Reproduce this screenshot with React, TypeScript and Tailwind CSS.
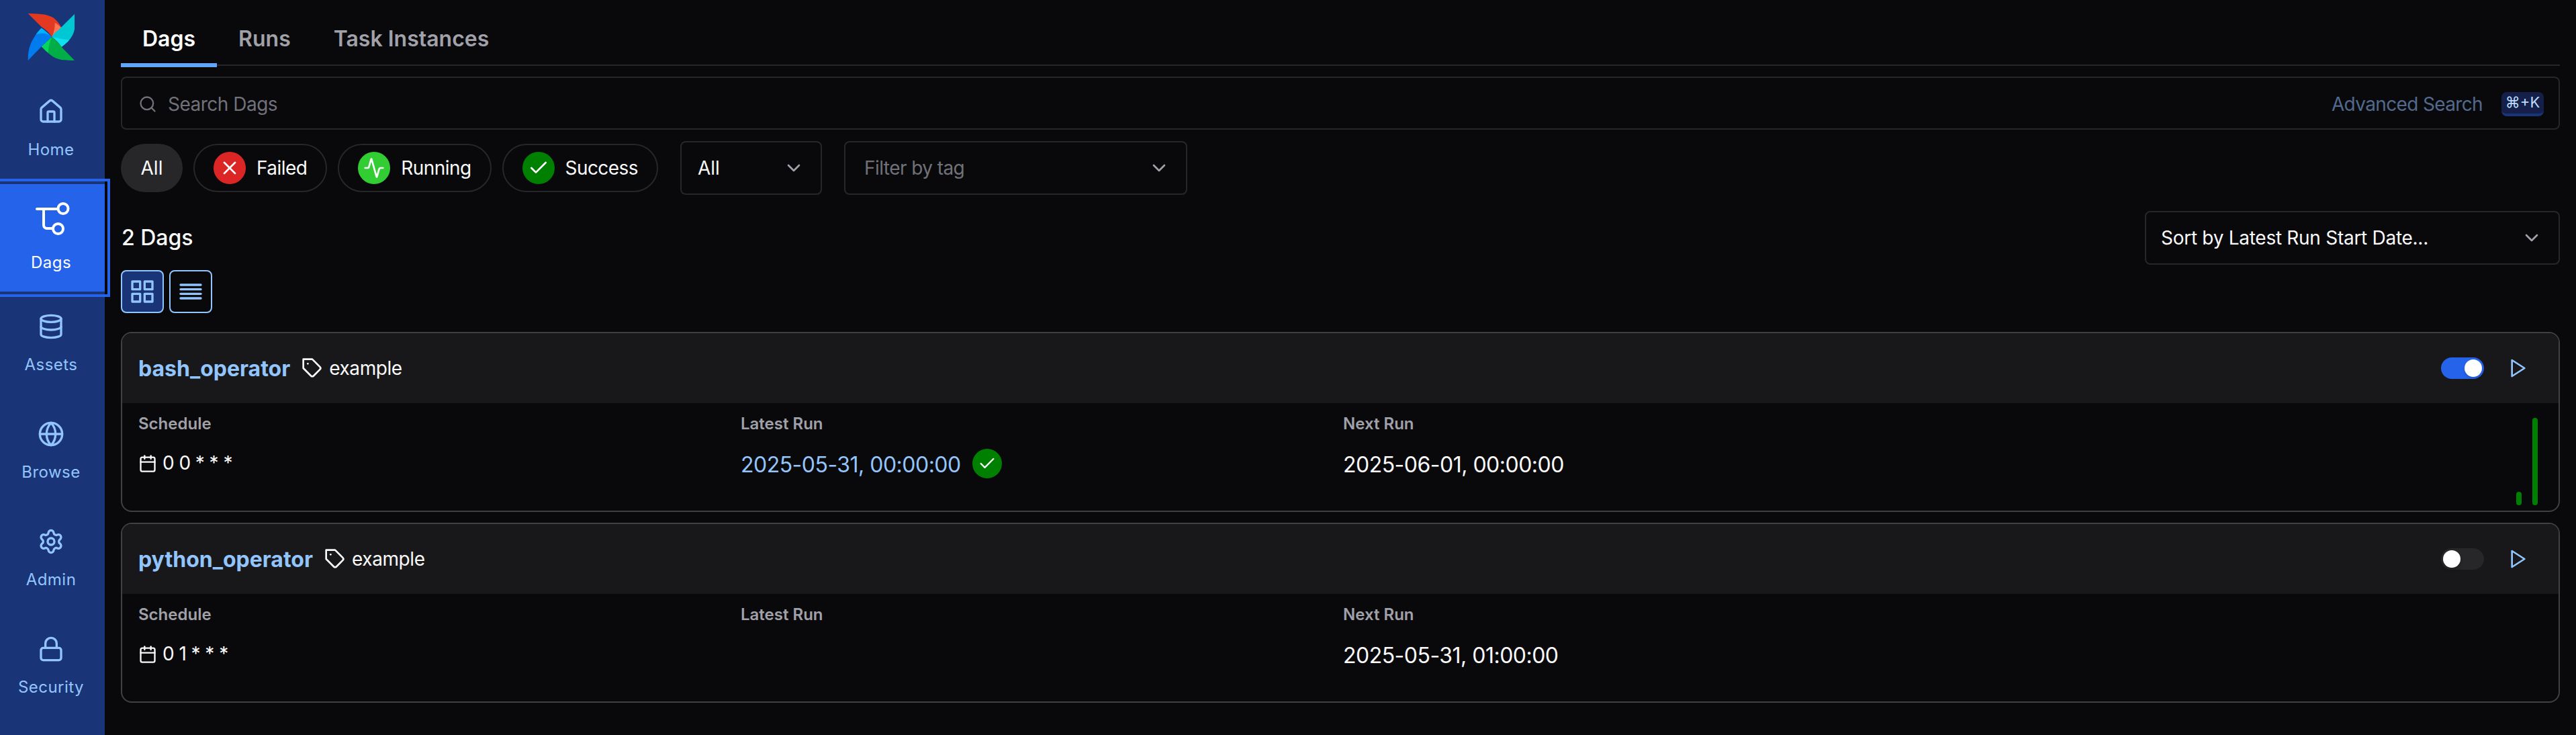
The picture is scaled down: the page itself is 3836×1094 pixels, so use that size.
import { Activity, Calendar, Check, ChevronDown, Database, Globe, House, Lock, Search, Settings, X } from "lucide-react";
import { FiAlignJustify, FiGrid, FiPlay, FiTag } from "react-icons/fi";
import type { ReactNode } from "react";

function Logo() {
	return (
		<svg width="70" height="70" viewBox="0 0 70 70" className="shrink-0">
			{/* red */}
			<path d="M0.7 0C10 0.2 18 0.4 25.7 1.7C31 3 36 4.5 39 6.7C44 10.5 48 16 50.7 21.7L36.3 35C33 29 27 24 20.7 20Z" fill="#e43921" />
			<path d="M40.7 14C44.5 16 48 18.5 50.7 21.7L36.3 35C39 29 41 21 40.7 14Z" fill="#ff7557" />
			{/* teal */}
			<path d="M70 1C70.6 9 70.6 16 70 23.3C69.6 26 68.6 29 67.3 31.7C65 36 62 40 59 43.3L36.3 35C38 31 41 28 45.7 25Z" fill="#00c7d4" />
			<path d="M36.3 35C44 37 52 38 62 39.5C59 43 55 47 50.7 50C47 44 42 39 36.3 35Z" fill="#11e1ee" />
			{/* green */}
			<path d="M70 70C63 70 57 70 52 69.3C47 68.5 43 67 39 65C32 61 26 55 20.7 49.3L36.3 35C42 39 47 44 50.7 50Z" fill="#00ad46" />
			<path d="M36.3 35C33 42 31 50 30.7 58.5C27 55.5 24 52.5 20.7 49.3Z" fill="#04d659" />
			{/* blue */}
			<path d="M0.7 70C0.6 64 1 58 2.3 53C3.5 48 5 44 7.3 40C9 37 10.5 34 12.3 31.7C15 28 17.5 24.5 20.7 21.7L36.3 35L20.7 49.3Z" fill="#017cee" />
			<path d="M12.3 31.7C15 28 17.5 24.5 20.7 21.7C26 25 31 30 36.3 35C29 29 20 28 12.3 31.7Z" fill="#00b2ff" />
		</svg>
	);
}

function DagIcon() {
	return (
		<svg width="56" height="56" viewBox="0 0 56 56" fill="none" stroke="currentColor" strokeWidth="4" strokeLinecap="round">
			<path d="M7 13H37" />
			<circle cx="46" cy="12.5" r="7.5" />
			<path d="M17 13V37a5 5 0 0 0 5 5H29" />
			<circle cx="38.5" cy="42.5" r="7.5" />
		</svg>
	);
}

function NavItem({ icon, label, active }: { icon: ReactNode; label: string; active?: boolean }) {
	return (
		<div
			className={`flex h-40 w-[156px] flex-col items-center justify-center pt-px pr-1 ${
				active ? "bg-[#2563eb] text-white outline-4 outline-offset-4 outline-[#2563eb]" : "text-[#93c5fd]"
			}`}
		>
			{icon}
			<span className="mt-[17px] text-2xl leading-10 tracking-[0.02em]">{label}</span>
		</div>
	);
}

function Pill({ color, icon, label }: { color: string; icon: ReactNode; label: string }) {
	return (
		<div className="flex h-[72px] items-center gap-4 rounded-full border-2 border-[#27272a] pr-7 pl-7 text-[28px] tracking-[-0.02em] text-[#fafafa]">
			<span className={`flex h-12 w-12 items-center justify-center rounded-full text-white ${color}`}>{icon}</span>
			{label}
		</div>
	);
}

function Select({ text, className }: { text: string; className: string }) {
	return (
		<div className={`flex h-20 items-center justify-between rounded-lg border-2 border-[#27272a] pr-6 text-[28px] ${className}`}>
			<span>{text}</span>
			<ChevronDown size={32} className="text-[#a1a1aa]" />
		</div>
	);
}

function Label({ children }: { children: ReactNode }) {
	return <div className="text-2xl leading-8 font-semibold text-[#a1a1aa]">{children}</div>;
}

function DagCard({ name, on, schedule, latest, next }: { name: string; on: boolean; schedule: string; latest?: string; next: string }) {
	return (
		<div className="h-[268px] overflow-hidden rounded-2xl border-2 border-[#3f3f46]">
			<div className="flex h-[104px] items-center justify-between bg-[#18181b] pr-[44px] pl-6">
				<div className="flex items-center">
					<span className="pt-[2px] text-[32px] font-bold text-[#93c5fd]">{name}</span>
					<FiTag size={32} className="ml-[17px] text-[#fafafa]" />
					<span className="ml-[9px] text-[28px] tracking-[-0.015em] text-[#fafafa]">example</span>
				</div>
				<div className="flex items-center gap-[35px]">
					<div className={`flex h-8 w-16 items-center rounded-full p-[3px] ${on ? "justify-end bg-[#2563eb]" : "justify-start bg-[#27272a]"}`}>
						<span className="h-[26px] w-[26px] rounded-full bg-white shadow-md" />
					</div>
					<FiPlay size={32} className="text-[#93c5fd]" />
				</div>
			</div>
			<div className="grid h-[160px] grid-cols-4 gap-2 pt-[15px] pr-6 pb-2 pl-6">
				<div>
					<Label>Schedule</Label>
					<div className="mt-[21px] flex items-center gap-[8px] text-[28px] leading-[44px] tracking-[-0.02em] text-[#fafafa]">
						<Calendar size={28} />
						<span className="-mt-[1px]">{schedule}</span>
					</div>
				</div>
				<div>
					<Label>Latest Run</Label>
					{latest && (
						<div className="mt-[21px] flex h-11 items-center gap-[17px] text-[32px] tracking-[-0.016em] text-[#93c5fd]">
							<span className="mt-1">{latest}</span>
							<span className="flex h-11 w-11 items-center justify-center rounded-full bg-[#008000] text-white">
								<Check size={28} />
							</span>
						</div>
					)}
				</div>
				<div>
					<Label>Next Run</Label>
					<div className="mt-[21px] flex h-11 items-center text-[32px] tracking-[-0.016em] text-[#fafafa]">
						<span className="mt-1">{next}</span>
					</div>
				</div>
				<div className="flex items-end justify-end gap-4 pr-[7px]">
					{latest && (
						<>
							<span className="h-[20px] w-2 rounded-sm bg-[#008000]" />
							<span className="h-[130px] w-2 rounded-sm bg-[#008000]" />
						</>
					)}
				</div>
			</div>
		</div>
	);
}

export default function App() {
	return (
		<div className="flex h-[1094px] bg-[#09090b] font-[Inter,sans-serif] text-[#fafafa]">
			<nav className="relative z-10 flex w-[156px] shrink-0 flex-col items-center bg-[#1a3478] pt-5">
				<div className="mb-6 flex h-[70px] items-center pr-1">
					<Logo />
				</div>
				<NavItem icon={<House size={40} />} label="Home" />
				<NavItem icon={<DagIcon />} label="Dags" active />
				<NavItem icon={<Database size={40} />} label="Assets" />
				<NavItem icon={<Globe size={40} />} label="Browse" />
				<NavItem icon={<Settings size={40} />} label="Admin" />
				<NavItem icon={<Lock size={40} />} label="Security" />
			</nav>

			<main className="min-w-0 flex-1 pt-4 pr-6 pl-6">
				<div className="flex h-[82px] border-b-2 border-[#27272a] text-[32px] font-semibold text-[#a1a1aa]">
					<div className="-mb-[2px] flex h-[84px] items-center border-b-[6px] border-[#60a5fa] pt-[6px] pr-8 pl-8 text-white">Dags</div>
					<div className="flex h-[84px] items-center border-b-[6px] border-transparent pt-[6px] pr-8 pl-8">Runs</div>
					<div className="flex h-[84px] items-center border-b-[6px] border-transparent pt-[6px] pr-8 pl-8">Task Instances</div>
				</div>

				<div className="mt-4 flex h-[79px] items-center justify-between rounded-lg border-2 border-[#27272a] pt-[2px] pr-[22px] pl-6 text-[28px]">
					<div className="flex items-center gap-4 text-[#71717a]">
						<Search size={28} />
						<span className="tracking-[-0.018em]">Search Dags</span>
					</div>
					<div className="flex items-center gap-7">
						<span className="tracking-[-0.023em] text-[#526a8e]">Advanced Search</span>
						<span className="flex h-9 w-[63px] items-center justify-center rounded-lg border-b-4 border-[#1a3478] bg-[#14204a] text-[22px] text-[#bfdbfe]">⌘+K</span>
					</div>
				</div>

				<div className="mt-[17px] flex h-20 items-center">
					<div className="flex h-[72px] w-[92px] items-center justify-center rounded-full bg-[#27272a] text-[28px]">All</div>
					<div className="ml-4 flex gap-4">
						<Pill color="bg-[#dc2626]" icon={<X size={32} />} label="Failed" />
						<Pill color="bg-[#32cd32]" icon={<Activity size={32} />} label="Running" />
						<Pill color="bg-[#008000]" icon={<Check size={32} />} label="Success" />
					</div>
					<div className="ml-[33px] flex gap-[33px]">
						<Select text="All" className="w-[211px] pl-6 text-[#fafafa]" />
						<Select text="Filter by tag" className="w-[511px] pl-7 tracking-[-0.02em] text-[#71717a]" />
					</div>
				</div>

				<div className="mt-6 flex h-[79px] items-center justify-between">
					<h2 className="mt-px ml-px text-[32px] font-medium">2 Dags</h2>
					<Select text="Sort by Latest Run Start Date..." className="w-[618px] pl-[22px] tracking-[-0.01em] text-[#fafafa]" />
				</div>

				<div className="mt-[9px] flex gap-2">
					<div className="flex h-16 w-16 items-center justify-center rounded-lg border-2 border-[#93c5fd] bg-[#1a3478] text-[#93c5fd]">
						<FiGrid size={40} />
					</div>
					<div className="flex h-16 w-16 items-center justify-center rounded-lg border-2 border-[#93c5fd] text-[#93c5fd]">
						<FiAlignJustify size={40} />
					</div>
				</div>

				<div className="mt-7 flex flex-col gap-4">
					<DagCard name="bash_operator" on schedule="0 0 * * *" latest="2025-05-31, 00:00:00" next="2025-06-01, 00:00:00" />
					<DagCard name="python_operator" on={false} schedule="0 1 * * *" next="2025-05-31, 01:00:00" />
				</div>
			</main>
		</div>
	);
}
